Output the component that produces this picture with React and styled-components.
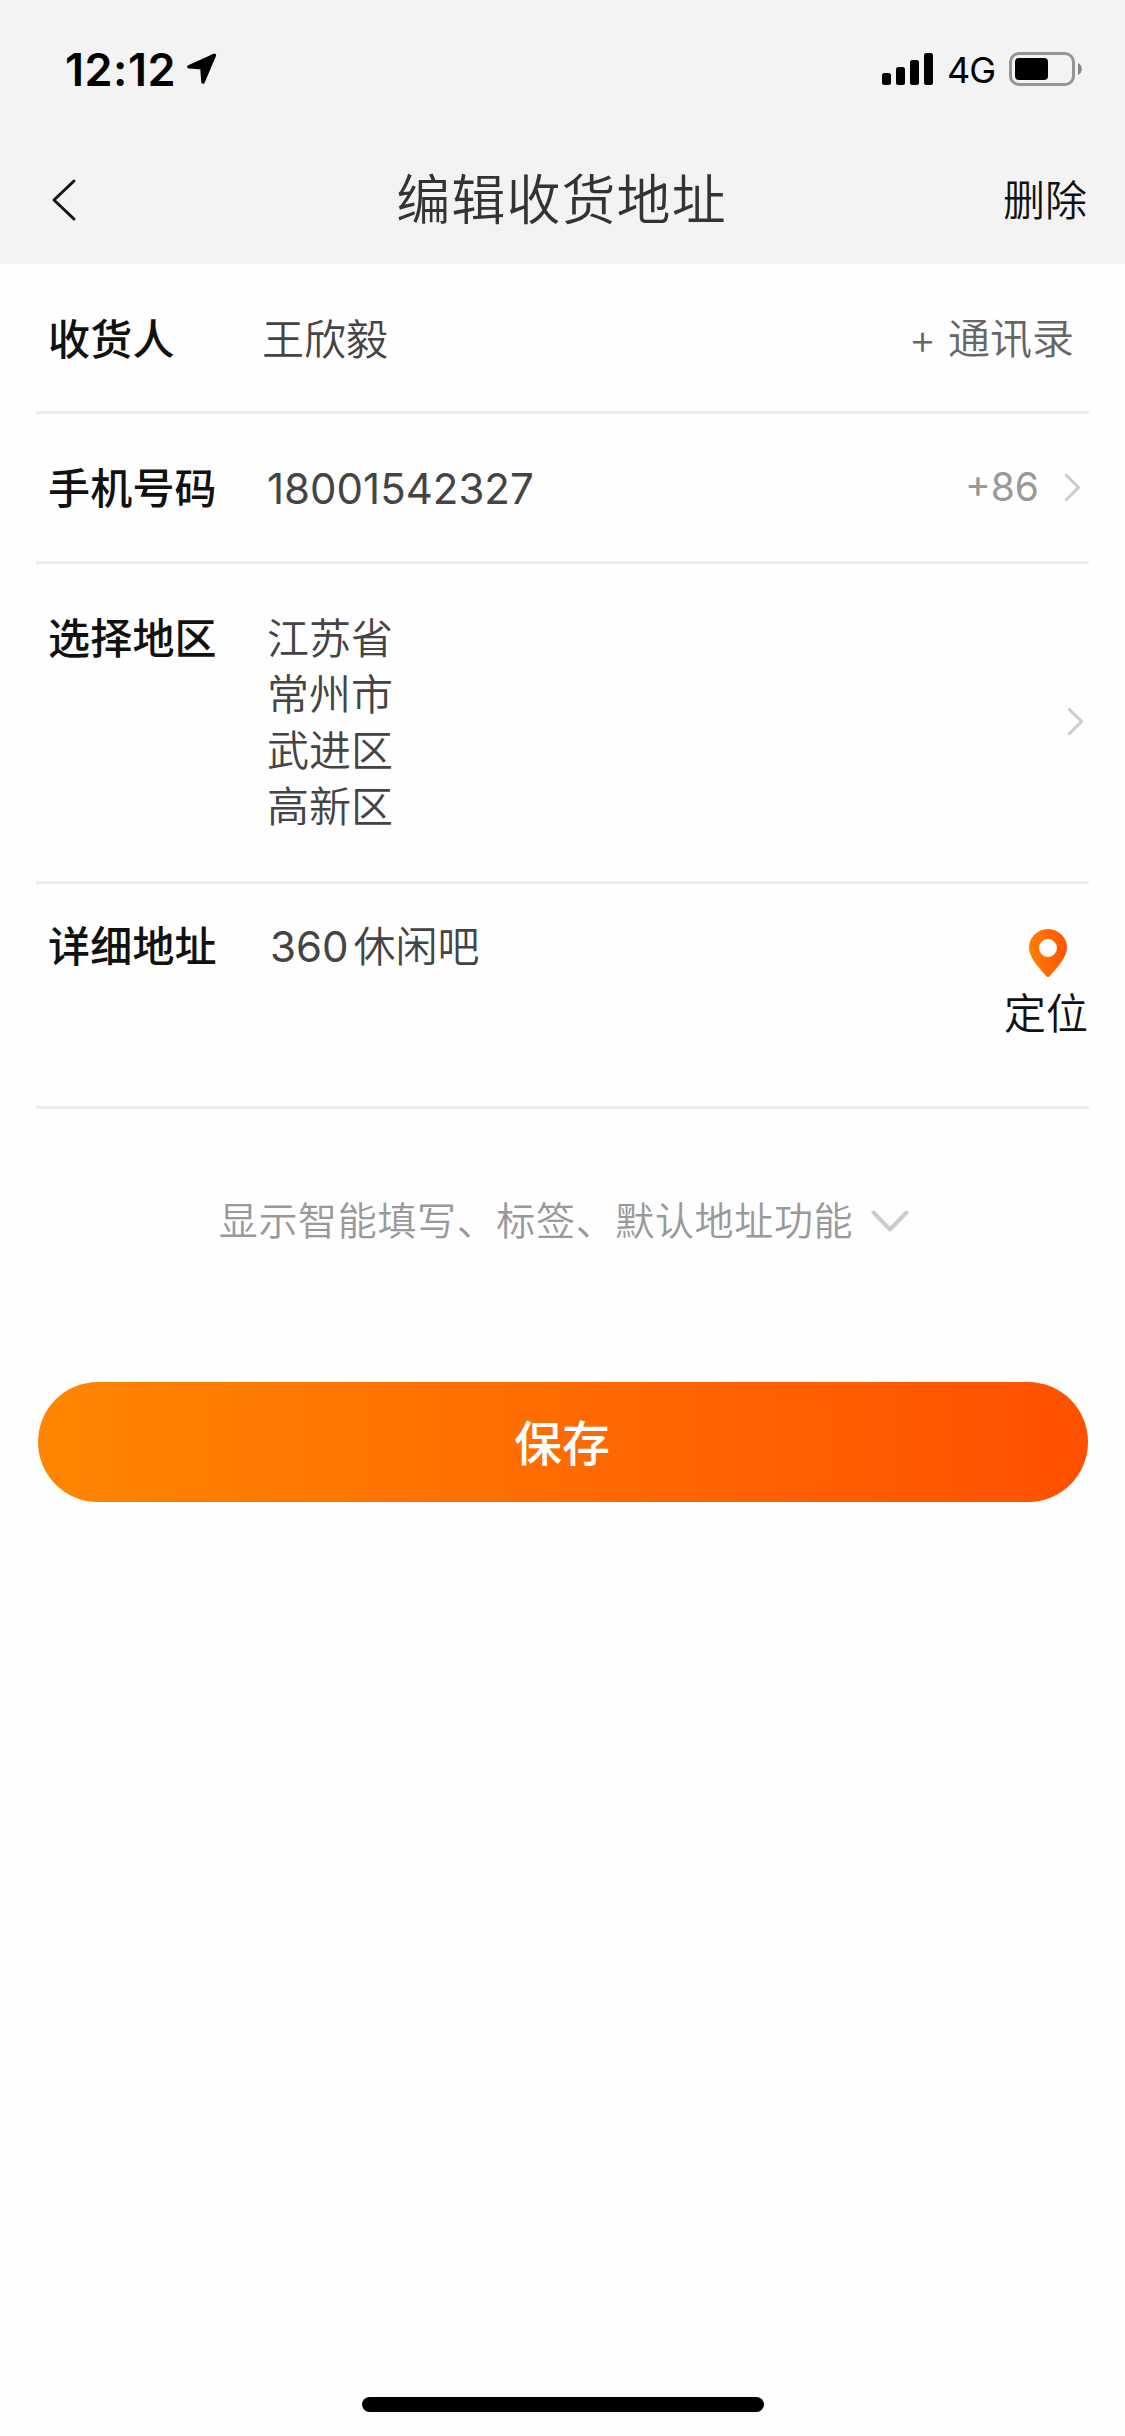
import React from 'react'
import styled, { createGlobalStyle } from 'styled-components'

const GlobalStyle = createGlobalStyle`
  * {
    box-sizing: border-box;
  }

  body {
    margin: 0;
    background: #fefefe;
    font-family: Inter, 'Noto Sans CJK SC', sans-serif;
  }
`

const Screen = styled.div`
  width: 1125px;
  height: 2436px;
  display: flex;
  flex-direction: column;
  background: #fefefe;
`

const Header = styled.header`
  height: 264px;
  background: #f3f3f3;
`

const StatusBar = styled.div`
  height: 132px;
  padding: 6px 43px 0 65px;
  display: flex;
  justify-content: space-between;
  align-items: center;
`

const StatusGroup = styled.div`
  display: flex;
  align-items: center;
`

const Time = styled.span`
  width: 122px;
  padding-top: 1px;
  font-size: 45px;
  line-height: 54px;
  font-weight: 600;
  letter-spacing: 0.5px;
  color: #000;
`

const Network = styled.span`
  width: 62px;
  margin-left: 14px;
  padding-top: 2px;
  font-size: 36px;
  line-height: 44px;
  font-weight: 400;
  letter-spacing: -1px;
  color: #000;
`

const NavBar = styled.nav`
  height: 132px;
  padding: 3px 38px 0 51px;
  display: grid;
  grid-template-columns: 100px 1fr 100px;
  align-items: center;
`

const Title = styled.h1`
  margin: 0 15px 0 0;
  padding-top: 3px;
  text-align: center;
  font-size: 54px;
  line-height: 72px;
  font-weight: 350;
  letter-spacing: 1.1px;
  white-space: nowrap;
  color: #333;
`

const IconButton = styled.button`
  display: flex;
  padding: 0;
  border: 0;
  background: none;
`

const TextButton = styled.button`
  padding: 0;
  border: 0;
  background: none;
  font-family: inherit;
  font-size: 42px;
  line-height: 56px;
  font-weight: 350;
  text-align: right;
  white-space: nowrap;
  color: ${(p) => p.$color || '#111'};
`

const DeleteButton = styled(TextButton)`
  padding-top: 2px;
`

const Form = styled.main`
  padding: 0 36px;
`

const Row = styled.div`
  height: ${(p) => p.$height || 150}px;
  padding: ${(p) => p.$top || 48}px 0 0 12px;
  display: flex;
  align-items: flex-start;
  border-bottom: 3px solid #ededed;
`

const Label = styled.div`
  width: 214px;
  flex-shrink: 0;
  font-size: 42px;
  line-height: 56px;
  font-weight: 500;
  letter-spacing: 0.2px;
  color: #111;
`

const Value = styled.div`
  flex: 1;
  padding-left: ${(p) => p.$indent || 0}px;
  font-size: 42px;
  line-height: 56px;
  font-weight: 350;
  color: #444;
`

const Digits = styled.span`
  margin-right: ${(p) => p.$gap || 0}px;
  font-weight: 400;
`

const Action = styled.div`
  display: flex;
  align-items: center;
  margin-top: -1px;
  padding-right: ${(p) => p.$right}px;
`

const DialCode = styled.span`
  margin-right: 25px;
  font-size: 39px;
  line-height: 54px;
  color: #999;
`

const RegionAction = styled(Action)`
  align-self: stretch;
  padding-bottom: 48px;
`

const Locate = styled.button`
  display: flex;
  flex-direction: column;
  align-items: center;
  padding: 10px 1px 0 0;
  border: 0;
  background: none;
  font-family: inherit;
  font-size: 42px;
  line-height: 56px;
  font-weight: 350;
  color: #111;
`

const PinIcon = styled.svg`
  margin: 0 0 9px 4px;
`

const Toggle = styled.div`
  margin-top: 84px;
  padding-left: 3px;
  display: flex;
  justify-content: center;
  align-items: center;
  gap: 18px;
  font-size: 39px;
  line-height: 56px;
  font-weight: 350;
  letter-spacing: 0.65px;
  color: #999;
`

const SaveButton = styled.button`
  width: 1050px;
  height: 120px;
  margin: 133px 0 0 2px;
  padding: 3px 2px 0 0;
  border: 0;
  border-radius: 60px;
  background: linear-gradient(to right, #ff8600, #ff5000);
  font-family: inherit;
  font-size: 48px;
  line-height: 64px;
  font-weight: 500;
  color: #fff;
`

const HomeIndicator = styled.div`
  width: 402px;
  height: 15px;
  margin: auto auto 24px;
  border-radius: 8px;
  background: #000;
`

const LocationArrow = () => (
  <svg width="30" height="32" viewBox="0 0 30 32">
    <path
      d="M27.300 2.300 2 13.800 15 14.600 16 29Z"
      fill="#000"
      stroke="#000"
      strokeWidth="3.6"
      strokeLinejoin="round"
    />
  </svg>
)

const Signal = () => (
  <svg width="51" height="32" viewBox="0 0 51 32">
    <rect x="0" y="20" width="9" height="12" rx="2.5" />
    <rect x="14" y="14" width="9" height="18" rx="2.5" />
    <rect x="28" y="7" width="9" height="25" rx="2.5" />
    <rect x="42" y="0" width="9" height="32" rx="2.5" />
  </svg>
)

const Battery = () => (
  <svg width="73" height="34" viewBox="0 0 73 34">
    <rect x="1.5" y="1.5" width="63" height="31" rx="8.5" fill="none" stroke="#959595" strokeWidth="3" />
    <rect x="6" y="6" width="33" height="22" rx="4" />
    <path d="M69 11c5 2 5 10 0 12z" fill="#858585" />
  </svg>
)

const ChevronRight = () => (
  <svg width="17" height="29" viewBox="0 0 17 29">
    <path
      d="M2.200 2.200 14.600 14.500 2.200 26.800"
      fill="none"
      stroke="#ccc"
      strokeWidth="3"
      strokeLinecap="round"
      strokeLinejoin="round"
    />
  </svg>
)

const App = () => {
  return (
    <>
      <GlobalStyle />
      <Screen>
        <Header>
          <StatusBar>
            <StatusGroup>
              <Time>12:12</Time>
              <LocationArrow />
            </StatusGroup>
            <StatusGroup>
              <Signal />
              <Network>4G</Network>
              <Battery />
            </StatusGroup>
          </StatusBar>
          <NavBar>
            <IconButton aria-label="返回">
              <svg width="26" height="44" viewBox="0 0 26 44">
                <path
                  d="M23 3 3 22 23 41"
                  fill="none"
                  stroke="#111"
                  strokeWidth="3"
                  strokeLinecap="round"
                  strokeLinejoin="round"
                />
              </svg>
            </IconButton>
            <Title>编辑收货地址</Title>
            <DeleteButton>删除</DeleteButton>
          </NavBar>
        </Header>

        <Form>
          <Row>
            <Label>收货人</Label>
            <Value>王欣毅</Value>
            <Action $right={15}>
              <TextButton $color="#666">+ 通讯录</TextButton>
            </Action>
          </Row>
          <Row $top={47}>
            <Label>手机号码</Label>
            <Value $indent={5}>
              <Digits>18001542327</Digits>
            </Value>
            <Action $right={8}>
              <DialCode>+86</DialCode>
              <ChevronRight />
            </Action>
          </Row>
          <Row $height={320} $top={47}>
            <Label>选择地区</Label>
            <Value $indent={5}>
              <div>江苏省</div>
              <div>常州市</div>
              <div>武进区</div>
              <div>高新区</div>
            </Value>
            <RegionAction $right={5}>
              <ChevronRight />
            </RegionAction>
          </Row>
          <Row $height={225} $top={35}>
            <Label>详细地址</Label>
            <Value $indent={8}>
              <Digits $gap={5}>360</Digits>休闲吧
            </Value>
            <Locate>
              <PinIcon width="38" height="48" viewBox="0 0 38 48">
                <defs>
                  <linearGradient id="pin" x1="0" y1="0" x2="1" y2="0">
                    <stop offset="0" stopColor="#ff7e00" />
                    <stop offset="1" stopColor="#ff5500" />
                  </linearGradient>
                </defs>
                <path
                  fill="url(#pin)"
                  fillRule="evenodd"
                  d="M19 0C8.500 0 0 8.300 0 18.600 0 28.500 10.500 40 17.800 47.500Q19 48.500 20.200 47.500C27.500 40 38 28.500 38 18.600 38 8.300 29.500 0 19 0ZM19 10a9 9 0 1 1 0 18 9 9 0 0 1 0-18Z"
                />
              </PinIcon>
              定位
            </Locate>
          </Row>

          <Toggle>
            显示智能填写、标签、默认地址功能
            <svg width="38" height="23" viewBox="0 0 38 23">
              <path
                d="M2.500 2.500 19 19.500 35.500 2.500"
                fill="none"
                stroke="#c9cec8"
                strokeWidth="4"
                strokeLinecap="round"
                strokeLinejoin="round"
              />
            </svg>
          </Toggle>

          <SaveButton>保存</SaveButton>
        </Form>

        <HomeIndicator />
      </Screen>
    </>
  )
}

export default App
